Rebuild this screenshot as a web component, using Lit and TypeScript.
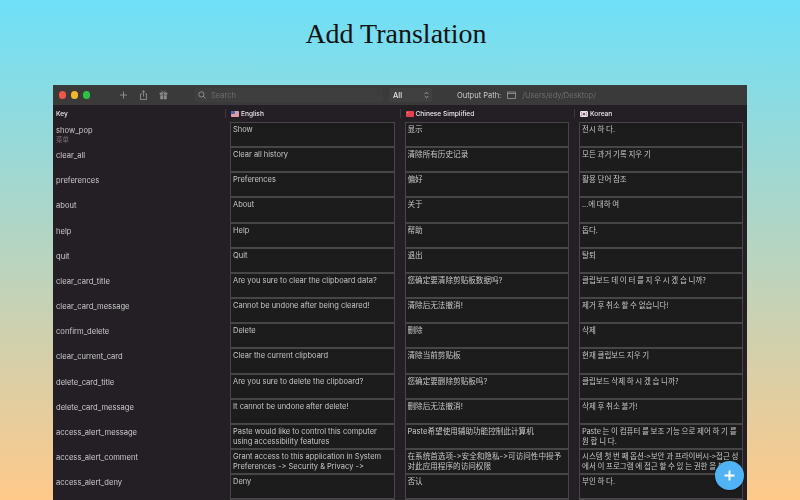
import {css, html, LitElement, svg} from 'lit';
import {customElement} from 'lit/decorators.js';

type Row = {key: string; sub?: string; en: string; zh: string; ko: string};

const rows: Row[] = [
  {key: 'show_pop', sub: '菜单', en: 'Show', zh: '显示', ko: '전시 하 다.'},
  {key: 'clear_all', en: 'Clear all history', zh: '清除所有历史记录', ko: '모든 과거 기록 지우 기'},
  {key: 'preferences', en: 'Preferences', zh: '偏好', ko: '활용 단어 참조'},
  {key: 'about', en: 'About', zh: '关于', ko: '...에 대하 여'},
  {key: 'help', en: 'Help', zh: '帮助', ko: '돕다.'},
  {key: 'quit', en: 'Quit', zh: '退出', ko: '탈퇴'},
  {key: 'clear_card_title', en: 'Are you sure to clear the clipboard data?', zh: '您确定要清除剪贴板数据吗?', ko: '클립보드 데 이 터 를 지 우 시 겠 습 니까?'},
  {key: 'clear_card_message', en: 'Cannot be undone after being cleared!', zh: '清除后无法撤消!', ko: '제거 후 취소 할 수 없습니다!'},
  {key: 'confirm_delete', en: 'Delete', zh: '删除', ko: '삭제'},
  {key: 'clear_current_card', en: 'Clear the current clipboard', zh: '清除当前剪贴板', ko: '현재 클립보드 지우 기'},
  {key: 'delete_card_title', en: 'Are you sure to delete the clipboard?', zh: '您确定要删除剪贴板吗?', ko: '클립보드 삭제 하 시 겠 습 니까?'},
  {key: 'delete_card_message', en: 'It cannot be undone after delete!', zh: '删除后无法撤消!', ko: '삭제 후 취소 불가!'},
  {key: 'access_alert_message', en: 'Paste would like to control this computer using accessibility features', zh: 'Paste希望使用辅助功能控制此计算机', ko: 'Paste 는 이 컴퓨터 를 보조 기능 으로 제어 하 기 를 원 합 니 다.'},
  {key: 'access_alert_comment', en: 'Grant access to this application in System Preferences -> Security & Privacy ->', zh: '在系统首选项->安全和隐私->可访问性中授予对此应用程序的访问权限', ko: '시스템 첫 번 째 옵션->보안 과 프라이버시->접근 성 에서 이 프로그램 에 접근 할 수 있 는 권한 을 부여'},
  {key: 'access_alert_deny', en: 'Deny', zh: '否认', ko: '부인 하 다.'},
  {key: '', en: '', zh: '', ko: ''},
];

const flagUs = svg`<svg class="flag" viewBox="0 0 8 6"><rect width="8" height="6" rx="1" fill="#e9e4ea"/><path d="M0 1h8M0 3h8M0 5h8" stroke="#d8525f"/><rect width="4" height="3" rx=".6" fill="#4a64b4"/></svg>`;
const flagCn = svg`<svg class="flag" viewBox="0 0 8 6"><rect width="8" height="6" rx="1" fill="#e5404f"/><rect x="1" y="1" width="1.4" height="1.2" fill="#e89a5a"/></svg>`;
const flagKr = svg`<svg class="flag" viewBox="0 0 8 6"><rect width="8" height="6" rx="1" fill="#e6e2e6"/><circle cx="4" cy="3" r="1.3" fill="#b8465c"/><path d="M2.7 3a1.3 1.3 0 0 0 2.6 0z" fill="#4a5ea8"/><path d="M.8 1.2l1 .9M6.2 2.1l1-.9M.8 4.8l1-.9M6.2 3.9l1 .9" stroke="#333" stroke-width=".8"/></svg>`;

@customElement('app-root')
export class AppRoot extends LitElement {
  static styles = css`
    :host {
      display: block;
      width: 800px;
      height: 500px;
      overflow: hidden;
      position: relative;
      background: linear-gradient(180deg, #6ee0f8 0%, #ffc98a 100%);
      font-family: Inter, 'Noto Sans CJK SC', sans-serif;
      font-variant-ligatures: none;
      font-feature-settings: 'calt' 0, 'liga' 0;
    }
    h1 {
      margin: 0;
      height: 85px;
      padding-top: 16px;
      box-sizing: border-box;
      text-align: center;
      font: 400 28px/36px 'Liberation Serif', serif;
      color: #111;
      transform: translateX(-4px);
    }
    .window {
      margin: 0 53px;
      height: 415px;
      overflow: hidden;
      background: #241f25;
      color: #c8c8c8;
      font-size: 7.5px;
      filter: blur(0.3px);
    }
    .toolbar {
      height: 20px;
      background: #3a3a3a;
      display: flex;
      align-items: center;
      padding-left: 5.5px;
    }
    .lights { display: flex; gap: 4.25px; width: 60.5px; }
    .light { width: 7.75px; height: 7.75px; border-radius: 50%; }
    .tools { display: flex; align-items: center; gap: 11px; width: 75px; }
    .tools svg { width: 9px; height: 10px; display: block; }
    .search {
      width: 189px;
      height: 14px;
      box-sizing: border-box;
      background: #3e3e3e;
      border-radius: 2px;
      display: flex;
      align-items: center;
      gap: 5px;
      padding-left: 4px;
      color: #6d6d6d;
    }
    .search svg { width: 8px; height: 8px; }
    .select {
      margin-left: 6px;
      width: 43px;
      height: 14px;
      background: #404040;
      border-radius: 2px;
      display: flex;
      align-items: center;
      justify-content: space-between;
      padding: 0 3px 0 4px;
      box-sizing: border-box;
      color: #e4e4e4;
      font-weight: 500;
    }
    .select svg { width: 5px; height: 8px; }
    .output {
      margin-left: 25px;
      display: flex;
      align-items: center;
      gap: 6px;
      color: #c9c9c9;
    }
    .output svg { width: 9px; height: 8px; }
    .output .path { color: #6d6d6d; }
    .grid {
      display: grid;
      grid-template-columns: 172px 174.5px 174.5px 173px;
    }
    .head {
      height: 17px;
      display: flex;
      align-items: center;
      gap: 2px;
      color: #e6e6e6;
      font-size: 6.6px;
      font-weight: 500;
      box-sizing: border-box;
      padding-left: 3px;
    }
    .head:not(.first) { padding-left: 0; }
    .head:not(.first)::before {
      content: '';
      width: 1px;
      height: 9px;
      background: #3c383d;
      margin-right: 3px;
    }
    .flag { width: 8px; height: 6px; flex: none; }
    .key {
      height: 25.17px;
      padding: 4px 0 0 3px;
      box-sizing: border-box;
      font-size: 7.6px;
      line-height: 10px;
      color: #cacaca;
      overflow: hidden;
    }
    .key small {
      display: block;
      font-size: 6.5px;
      line-height: 9px;
      color: #77737a;
    }
    .cell {
      height: 25.17px;
      padding: 0 5px;
      box-sizing: border-box;
    }
    .box {
      height: 25.17px;
      box-sizing: border-box;
      border: 1px solid #474548;
      background: #1d1c1d;
      padding: 2px 2px 0;
      font-size: 7.5px;
      line-height: 9.7px;
      color: #c6c6c6;
      overflow: hidden;
    }
    .ko { font-family: 'Noto Sans CJK KR', sans-serif; padding-top: 1px; }
    .zh { font-size: 7.6px; }
    .cell.last .box { margin-right: -1px; }
    .fab {
      position: absolute;
      left: 715px;
      top: 461px;
      width: 29px;
      height: 29px;
      border-radius: 50%;
      background: #4fb3f6;
      box-shadow: 0 1px 3px rgba(0, 0, 0, .25);
      display: flex;
      align-items: center;
      justify-content: center;
    }
    .fab svg { width: 11px; height: 11px; }
  `;

  render() {
    return html`
      <h1>Add Translation</h1>
      <div class="window">
        <div class="toolbar">
          <div class="lights">
            <span class="light" style="background:#f0564e"></span>
            <span class="light" style="background:#f5b62c"></span>
            <span class="light" style="background:#2ec244"></span>
          </div>
          <div class="tools">
            <svg viewBox="0 0 9 10"><path d="M4.5 1.5v7M1 5h7" stroke="#8a8a8a" stroke-width="1" fill="none"/></svg>
            <svg viewBox="0 0 9 10" fill="none" stroke="#8e8e8e" stroke-width=".9"><path d="M3 3.8H1.5v5.7h6V3.8H6M4.5 6.5V.7M3 2.1 4.5.7 6 2.1"/></svg>
            <svg viewBox="0 0 9 10"><path d="M.7 2.6h7.6v2.1H.7zM1.3 5.3h6.4v4H1.3z" fill="#8e8e8e"/><path d="M4.5 2v7.5" stroke="#3a3a3a" stroke-width=".8"/><path d="M2.5.8l2 1.6 2-1.6" stroke="#8e8e8e" fill="none" stroke-width=".8"/></svg>
          </div>
          <div class="search">
            <svg viewBox="0 0 8 8" fill="none" stroke="#a0a0a0" stroke-width=".8"><circle cx="3.4" cy="3.4" r="2.6"/><path d="M5.3 5.3 7.6 7.6"/></svg>
            <span>Search</span>
          </div>
          <div class="select">
            <span>All</span>
            <svg viewBox="0 0 5 8" fill="none" stroke="#b5b5b5" stroke-width=".8"><path d="M.7 3 2.5 1.2 4.3 3M.7 5l1.8 1.8L4.3 5"/></svg>
          </div>
          <div class="output">
            <span>Output Path:</span>
            <svg viewBox="0 0 9 8" fill="none" stroke="#9a9a9a" stroke-width=".8"><path d="M.5 1h8v6.5h-8zM.5 2.5h8"/></svg>
            <span class="path">/Users/edy/Desktop/</span>
          </div>
        </div>
        <div class="grid">
          <div class="head first">Key</div>
          <div class="head">${flagUs}English</div>
          <div class="head">${flagCn}Chinese Simplified</div>
          <div class="head">${flagKr}Korean</div>
          ${rows.map(
            (r) => html`
              <div class="key">${r.key}${r.sub ? html`<small>${r.sub}</small>` : ''}</div>
              <div class="cell"><div class="box">${r.en}</div></div>
              <div class="cell"><div class="box zh">${r.zh}</div></div>
              <div class="cell last"><div class="box ko">${r.ko}</div></div>
            `,
          )}
        </div>
      </div>
      <div class="fab">
        <svg viewBox="0 0 11 11"><path d="M5.5 .5v10M.5 5.5h10" stroke="#fff" stroke-width="2"/></svg>
      </div>
    `;
  }
}
